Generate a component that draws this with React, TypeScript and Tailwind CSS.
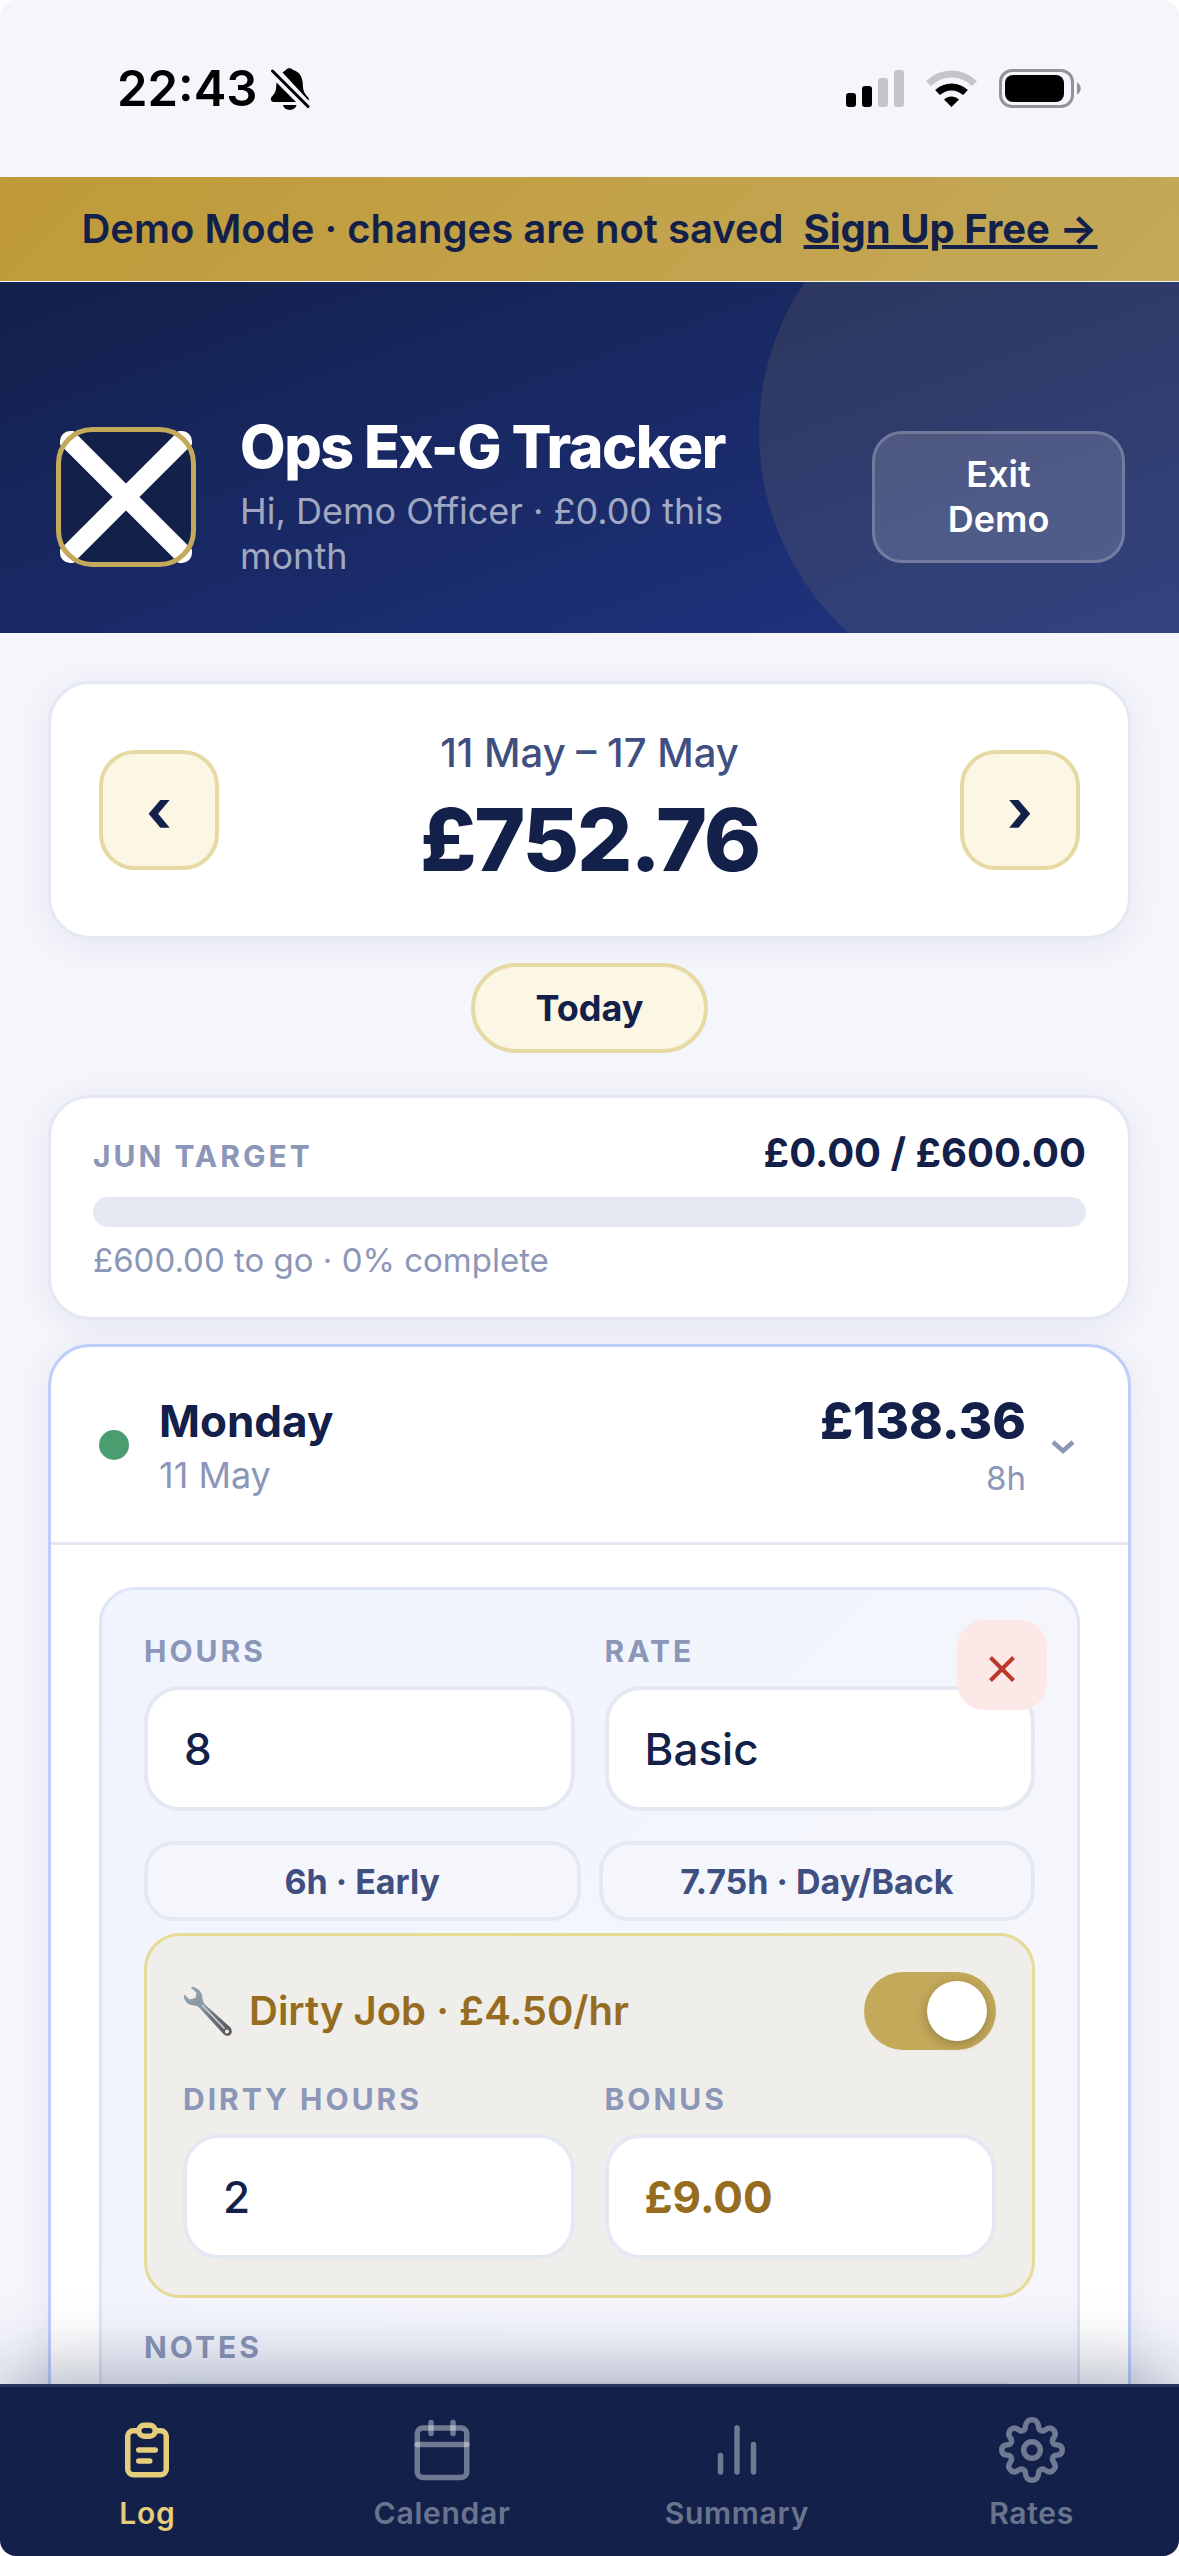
import { useState, type ReactNode } from 'react';

const labelClass =
    'block text-[30px] leading-[39px] font-bold tracking-widest text-[#8b96b8] uppercase';
const fieldClass =
    'mt-[15px] block h-[125px] w-full appearance-none rounded-[36px] border-4 border-[#e4e8f3] bg-white px-9 text-[44px] outline-none focus:border-[#bfcdfb]';
const cardClass =
    'rounded-[42px] border-[3px] bg-white shadow-[0_6px_36px_rgba(18,32,75,0.07)]';

const StatusBar = () => (
    <div className="flex h-[177px] shrink-0 items-center justify-between pr-[98px] pl-[117px] text-black">
        <div className="flex items-center gap-3">
            <span className="text-[49px] leading-none font-semibold">22:43</span>
            <svg className="h-[44px] w-[40px]" viewBox="0 0 40 44" aria-hidden="true">
                <path
                    fill="currentColor"
                    d="M12.500 5.500C14.500 3.800 15.500 3.500 16 3C17 .8 21.500 .8 23 3C29.500 4.800 32.500 10 32.800 17C33 24 34.500 26.500 37.500 29.500C39 31 39 32.500 38.500 33.500ZM6.500 15.500L26 35H4C1 35 .2 32.500 1.300 30.300C3.500 27.500 5.500 26 6 22ZM13 38H26.500C25 44.500 14.500 44.500 13 38Z"
                />
                <path
                    d="M2.500 4L38 39.500"
                    stroke="currentColor"
                    strokeWidth="3"
                    strokeLinecap="round"
                />
            </svg>
        </div>
        <div className="flex items-center gap-[22px]">
            <svg className="h-[38px] w-[58px]" viewBox="0 0 58 38" aria-hidden="true">
                <rect y="23" width="10" height="14" rx="3" />
                <rect x="16" y="16" width="10" height="21" rx="3" />
                <rect x="32" y="8" width="10" height="29" rx="3" fill="#c4c5c9" />
                <rect x="48" y="0" width="10" height="37" rx="3" fill="#c4c5c9" />
            </svg>
            <svg className="h-[38px] w-[51px]" viewBox="0 0 51 38" fill="none" aria-hidden="true">
                <path d="M2.500 13.500C15.500 .8 35.500 .8 48.500 13.500" stroke="#c4c5c9" strokeWidth="7" />
                <path d="M11.500 22.500C19.500 15 31.500 15 39.500 22.500" stroke="#000" strokeWidth="7" />
                <path d="M18 29.500C22.500 25.600 28.500 25.600 33 29.500L25.500 37Z" fill="#000" />
            </svg>
            <svg className="h-[39px] w-[82px]" viewBox="0 0 82 39" fill="none" aria-hidden="true">
                <rect x="1.500" y="1.500" width="72" height="36" rx="11.500" stroke="#939398" strokeWidth="3" />
                <rect x="6" y="6" width="59" height="27" rx="8" fill="#000" />
                <path d="M78 13.500C83 15.500 83 23.500 78 25.500Z" fill="#939398" />
            </svg>
        </div>
    </div>
);

const Logo = () => (
    <svg className="-m-1 h-[140px] w-[140px] shrink-0" viewBox="0 0 140 140" aria-hidden="true">
        <clipPath id="logo-square">
            <rect x="4" y="4" width="132" height="132" rx="10" />
        </clipPath>
        <rect x="2" y="2" width="136" height="136" rx="34" fill="#12204a" />
        <path
            d="M4 4L136 136M136 4L4 136"
            stroke="#fff"
            strokeWidth="19"
            clipPath="url(#logo-square)"
        />
        <rect
            x="2.500"
            y="2.500"
            width="135"
            height="135"
            rx="34"
            fill="none"
            stroke="#c4a95a"
            strokeWidth="5"
        />
    </svg>
);

const Wrench = () => (
    <svg className="h-[50px] w-[50px]" viewBox="0 0 50 50" aria-hidden="true">
        <defs>
            <linearGradient id="steel" x1="0" y1="0" x2="1" y2="1">
                <stop offset="0" stopColor="#93a4af" />
                <stop offset="0.4" stopColor="#8797a3" />
                <stop offset="0.6" stopColor="#6d747c" />
                <stop offset="1" stopColor="#5b5252" />
            </linearGradient>
        </defs>
        <path
            fill="url(#steel)"
            fillRule="evenodd"
            d="M9 .8C15 1.500 19.500 6.500 19.500 12C19.500 15 20.500 17 23 19.500L47 41C50 44.500 49 49 45.500 49.700C43.500 50 41.500 49.500 40 47.500L17.500 23C15.500 20.500 14 19.800 11.500 19.500C5.500 19.500 1 15.500 .8 9.500C.8 8.500 1.500 8.500 2.200 9.200L6.500 13.500L12.500 12L13.500 6.500L8.500 2.200C7.800 1.500 8 .8 9 .8ZM44 43.500A2 2 0 1 0 44 47.500A2 2 0 1 0 44 43.500Z"
        />
        <path d="M19.500 19.500L41 42" stroke="#c9ced2" strokeWidth="1.800" strokeLinecap="round" />
    </svg>
);

const NavItem = ({
    label,
    active = false,
    children
}: {
    label: string;
    active?: boolean;
    children: ReactNode;
}) => (
    <a
        href="#"
        className={
            active
                ? 'flex flex-1 flex-col items-center gap-3 text-[#e6cd7b]'
                : 'flex flex-1 flex-col items-center gap-3 text-white/40'
        }
    >
        <svg
            className="h-[66px] w-[66px]"
            viewBox="0 0 24 24"
            fill="none"
            stroke="currentColor"
            strokeWidth="2"
            strokeLinecap="round"
            strokeLinejoin="round"
            aria-hidden="true"
        >
            {children}
        </svg>
        <span className="text-[30px] leading-9 font-semibold tracking-wide">{label}</span>
    </a>
);

export default function App() {
    const [hours, setHours] = useState('8');
    const [rate, setRate] = useState('Basic');
    const [dirty, setDirty] = useState(true);
    const [dirtyHours, setDirtyHours] = useState('2');

    const bonus = (Number(dirtyHours) || 0) * 4.5;

    return (
        <div className="flex h-screen flex-col overflow-hidden rounded-2xl bg-[#f5f6fc] font-[Inter,sans-serif] text-[#12204a]">
            <StatusBar />

            <div className="flex h-[104px] shrink-0 items-center justify-center gap-5 bg-[linear-gradient(135deg,#c09a38,#c4a95a)] text-[40px] font-semibold">
                <span>Demo Mode · changes are not saved</span>
                <a href="#" className="font-bold underline">
                    Sign Up Free →
                </a>
            </div>

            <header className="relative mt-px flex shrink-0 items-center gap-12 overflow-hidden bg-[linear-gradient(160deg,#12204a_0%,#1a2a68_50%,#1f3585_100%)] pt-[132px] pr-[54px] pb-[54px] pl-[60px]">
                <div className="absolute -top-[120px] -right-[120px] h-[540px] w-[540px] rounded-full bg-[#c4a95a]/12" />
                <Logo />
                <div className="min-w-0 flex-1">
                    <h1 className="text-[59px] leading-[66px] font-extrabold tracking-tight text-white">
                        Ops Ex-G Tracker
                    </h1>
                    <p className="mt-[9px] max-w-[500px] text-[36px] leading-[45px] text-white/60">
                        Hi, Demo Officer · £0.00 this month
                    </p>
                </div>
                <button
                    type="button"
                    className="relative w-[253px] rounded-[30px] border-[3px] border-white/20 bg-white/15 px-12 py-[18px] text-[36px] leading-[45px] font-semibold text-white"
                >
                    Exit Demo
                </button>
            </header>

            <main className="min-h-0 flex-1 overflow-y-auto px-12 pt-12 [scrollbar-width:none]">
                <section
                    className={`${cardClass} flex items-center justify-between border-[#e4e8f3] px-12 py-[45px]`}
                >
                    <button
                        type="button"
                        aria-label="Previous week"
                        className="h-[120px] w-[120px] rounded-[36px] border-4 border-[#e6d9a3] bg-[#fcf6e4] text-[60px] leading-none font-bold"
                    >
                        ‹
                    </button>
                    <div className="text-center">
                        <p className="text-[40px] leading-[48px] font-medium text-[#3f4f80]">
                            11 May – 17 May
                        </p>
                        <p className="mt-3 text-[87px] leading-[102px] font-extrabold tracking-tight">
                            £752.76
                        </p>
                    </div>
                    <button
                        type="button"
                        aria-label="Next week"
                        className="h-[120px] w-[120px] rounded-[36px] border-4 border-[#e6d9a3] bg-[#fcf6e4] text-[60px] leading-none font-bold"
                    >
                        ›
                    </button>
                </section>

                <button
                    type="button"
                    className="mx-auto mt-6 block h-[90px] rounded-full border-4 border-[#e6d9a3] bg-[#fcf6e4] px-[61px] text-[36px] font-bold"
                >
                    Today
                </button>

                <section
                    className={`${cardClass} mt-[42px] border-[#e4e8f3] px-[42px] pt-8 pb-9`}
                >
                    <div className="flex items-baseline justify-between leading-[45px]">
                        <h2 className="text-[30px] font-bold tracking-widest text-[#8b96b8] uppercase">
                            Jun Target
                        </h2>
                        <span className="text-[40px] font-bold">£0.00 / £600.00</span>
                    </div>
                    <div className="mt-[18px] h-[30px] rounded-full bg-[#e4e8f3]" />
                    <p className="mt-3 text-[33px] leading-[42px] text-[#8b96b8]">
                        £600.00 to go · 0% complete
                    </p>
                </section>

                <section className={`${cardClass} mt-6 border-[#bfcdfb]`}>
                    <button
                        type="button"
                        className="flex w-full items-center border-b-[3px] border-[#e4e8f3] px-12 py-11"
                    >
                        <span className="mr-[30px] h-[30px] w-[30px] rounded-full bg-[#4a9d6f]" />
                        <span className="flex flex-1 flex-col gap-2 text-left">
                            <span className="text-[44px] leading-[54px] font-bold">Monday</span>
                            <span className="text-[36px] leading-[39px] text-[#8b96b8]">
                                11 May
                            </span>
                        </span>
                        <span className="flex flex-col gap-2 text-right">
                            <span className="text-[51px] leading-[60px] font-extrabold">
                                £138.36
                            </span>
                            <span className="text-[33px] leading-[39px] text-[#8b96b8]">8h</span>
                        </span>
                        <svg
                            className="ml-6 h-[30px] w-[30px]"
                            viewBox="0 0 30 30"
                            fill="none"
                            aria-hidden="true"
                        >
                            <path d="M3 12L13 21L23 12" stroke="#8b96b8" strokeWidth="4.500" />
                        </svg>
                    </button>

                    <div className="px-12 py-[42px]">
                        <div className="relative rounded-[36px] border-[3px] border-[#dde5f7] bg-[linear-gradient(135deg,#f0f4fe,#f5f6fc_60%)] p-[42px]">
                            <button
                                type="button"
                                aria-label="Remove entry"
                                className="absolute top-[30px] right-[30px] flex h-[90px] w-[90px] items-center justify-center rounded-[27px] bg-[#fce8e6] pt-2"
                            >
                                <svg className="h-[26px] w-[26px]" viewBox="0 0 26 26">
                                    <path
                                        d="M1.500 1.500L24.500 24.500M24.500 1.500L1.500 24.500"
                                        stroke="#b93a2b"
                                        strokeWidth="4"
                                    />
                                </svg>
                            </button>

                            <div className="grid grid-cols-2 gap-[30px]">
                                <div>
                                    <label htmlFor="hours" className={labelClass}>
                                        Hours
                                    </label>
                                    <input
                                        id="hours"
                                        inputMode="decimal"
                                        className={`${fieldClass} font-medium`}
                                        value={hours}
                                        onChange={(e) => setHours(e.target.value)}
                                    />
                                </div>
                                <div>
                                    <label htmlFor="rate" className={labelClass}>
                                        Rate
                                    </label>
                                    <select
                                        id="rate"
                                        className={`${fieldClass} font-medium`}
                                        value={rate}
                                        onChange={(e) => setRate(e.target.value)}
                                    >
                                        <option>Basic</option>
                                    </select>
                                </div>
                            </div>

                            <div className="mt-[30px] grid grid-cols-2 gap-[18px] text-[34px] font-bold text-[#3f4f80]">
                                <button
                                    type="button"
                                    onClick={() => setHours('6')}
                                    className="h-20 rounded-[30px] border-4 border-[#e4e8f3] bg-[#f5f6fc]"
                                >
                                    6h · Early
                                </button>
                                <button
                                    type="button"
                                    onClick={() => setHours('7.75')}
                                    className="h-20 rounded-[30px] border-4 border-[#e4e8f3] bg-[#f5f6fc]"
                                >
                                    7.75h · Day/Back
                                </button>
                            </div>

                            <div className="mt-3 rounded-[36px] border-[3px] border-[#e6db94] bg-[#efeeea] p-9">
                                <div className="flex items-center justify-between">
                                    <label
                                        htmlFor="dirty"
                                        className="flex items-center gap-4 text-[40px] font-semibold text-[#956c20]"
                                    >
                                        <Wrench />
                                        Dirty Job · £4.50/hr
                                    </label>
                                    <input
                                        id="dirty"
                                        type="checkbox"
                                        role="switch"
                                        checked={dirty}
                                        onChange={(e) => setDirty(e.target.checked)}
                                        className="flex h-[78px] w-[132px] appearance-none items-center rounded-full bg-[#d5daea] px-[9px] before:h-[60px] before:w-[60px] before:rounded-full before:bg-white before:shadow-[0_3px_12px_rgba(0,0,0,0.25)] checked:justify-end checked:bg-[#c4a95a]"
                                    />
                                </div>
                                {dirty && (
                                    <div className="mt-[30px] grid grid-cols-2 gap-[30px]">
                                        <div>
                                            <label htmlFor="dirty-hours" className={labelClass}>
                                                Dirty Hours
                                            </label>
                                            <input
                                                id="dirty-hours"
                                                inputMode="decimal"
                                                className={`${fieldClass} font-medium`}
                                                value={dirtyHours}
                                                onChange={(e) => setDirtyHours(e.target.value)}
                                            />
                                        </div>
                                        <div>
                                            <label htmlFor="bonus" className={labelClass}>
                                                Bonus
                                            </label>
                                            <input
                                                id="bonus"
                                                readOnly
                                                className={`${fieldClass} font-bold text-[#956c20]`}
                                                value={`£${bonus.toFixed(2)}`}
                                            />
                                        </div>
                                    </div>
                                )}
                            </div>

                            <div className="mt-[30px]">
                                <label htmlFor="notes" className={labelClass}>
                                    Notes
                                </label>
                                <input id="notes" className={fieldClass} />
                            </div>
                        </div>
                    </div>
                </section>
            </main>

            <nav className="relative flex shrink-0 border-t-[3px] border-[#26335b] bg-[#12204a] pt-[30px] pb-[25px] shadow-[0_-12px_72px_rgba(18,32,75,0.35)]">
                <NavItem label="Log" active>
                    <path d="M9 5H7a2 2 0 0 0-2 2v12a2 2 0 0 0 2 2h10a2 2 0 0 0 2-2V7a2 2 0 0 0-2-2h-2M9 5a2 2 0 0 0 2 2h2a2 2 0 0 0 2-2M9 5a2 2 0 0 1 2-2h2a2 2 0 0 1 2 2M9 12h6M9 16h4" />
                </NavItem>
                <NavItem label="Calendar">
                    <rect x="3" y="4" width="18" height="18" rx="2" />
                    <line x1="16" y1="2" x2="16" y2="6" />
                    <line x1="8" y1="2" x2="8" y2="6" />
                    <line x1="3" y1="10" x2="21" y2="10" />
                </NavItem>
                <NavItem label="Summary">
                    <line x1="18" y1="20" x2="18" y2="10" />
                    <line x1="12" y1="20" x2="12" y2="4" />
                    <line x1="6" y1="20" x2="6" y2="14" />
                </NavItem>
                <NavItem label="Rates">
                    <circle cx="12" cy="12" r="3" />
                    <path d="M12 1c1.600 0 2.300 1.200 2.400 2.600.1 1.300 1.300 1.900 2.400 1.100 1.200-.9 2.300-.8 3 0 .8.7.9 1.800 0 3-.8 1.100-.2 2.300 1.100 2.400C22.300 10.200 23 10.900 23 12s-.7 1.800-2.100 1.900c-1.300.1-1.900 1.300-1.100 2.400.9 1.200.8 2.300 0 3-.7.8-1.800.9-3 0-1.100-.8-2.300-.2-2.400 1.100C14.300 21.800 13.600 23 12 23s-2.300-1.200-2.400-2.600c-.1-1.300-1.300-1.900-2.400-1.100-1.200.9-2.300.8-3 0-.8-.7-.9-1.800 0-3 .8-1.100.2-2.300-1.100-2.400C1.700 13.800 1 13.100 1 12s.7-1.800 2.100-1.900c1.300-.1 1.900-1.300 1.100-2.400-.9-1.200-.8-2.300 0-3 .7-.8 1.800-.9 3 0 1.100.8 2.300.2 2.400-1.100C9.700 2.200 10.400 1 12 1z" />
                </NavItem>
            </nav>
        </div>
    );
}
